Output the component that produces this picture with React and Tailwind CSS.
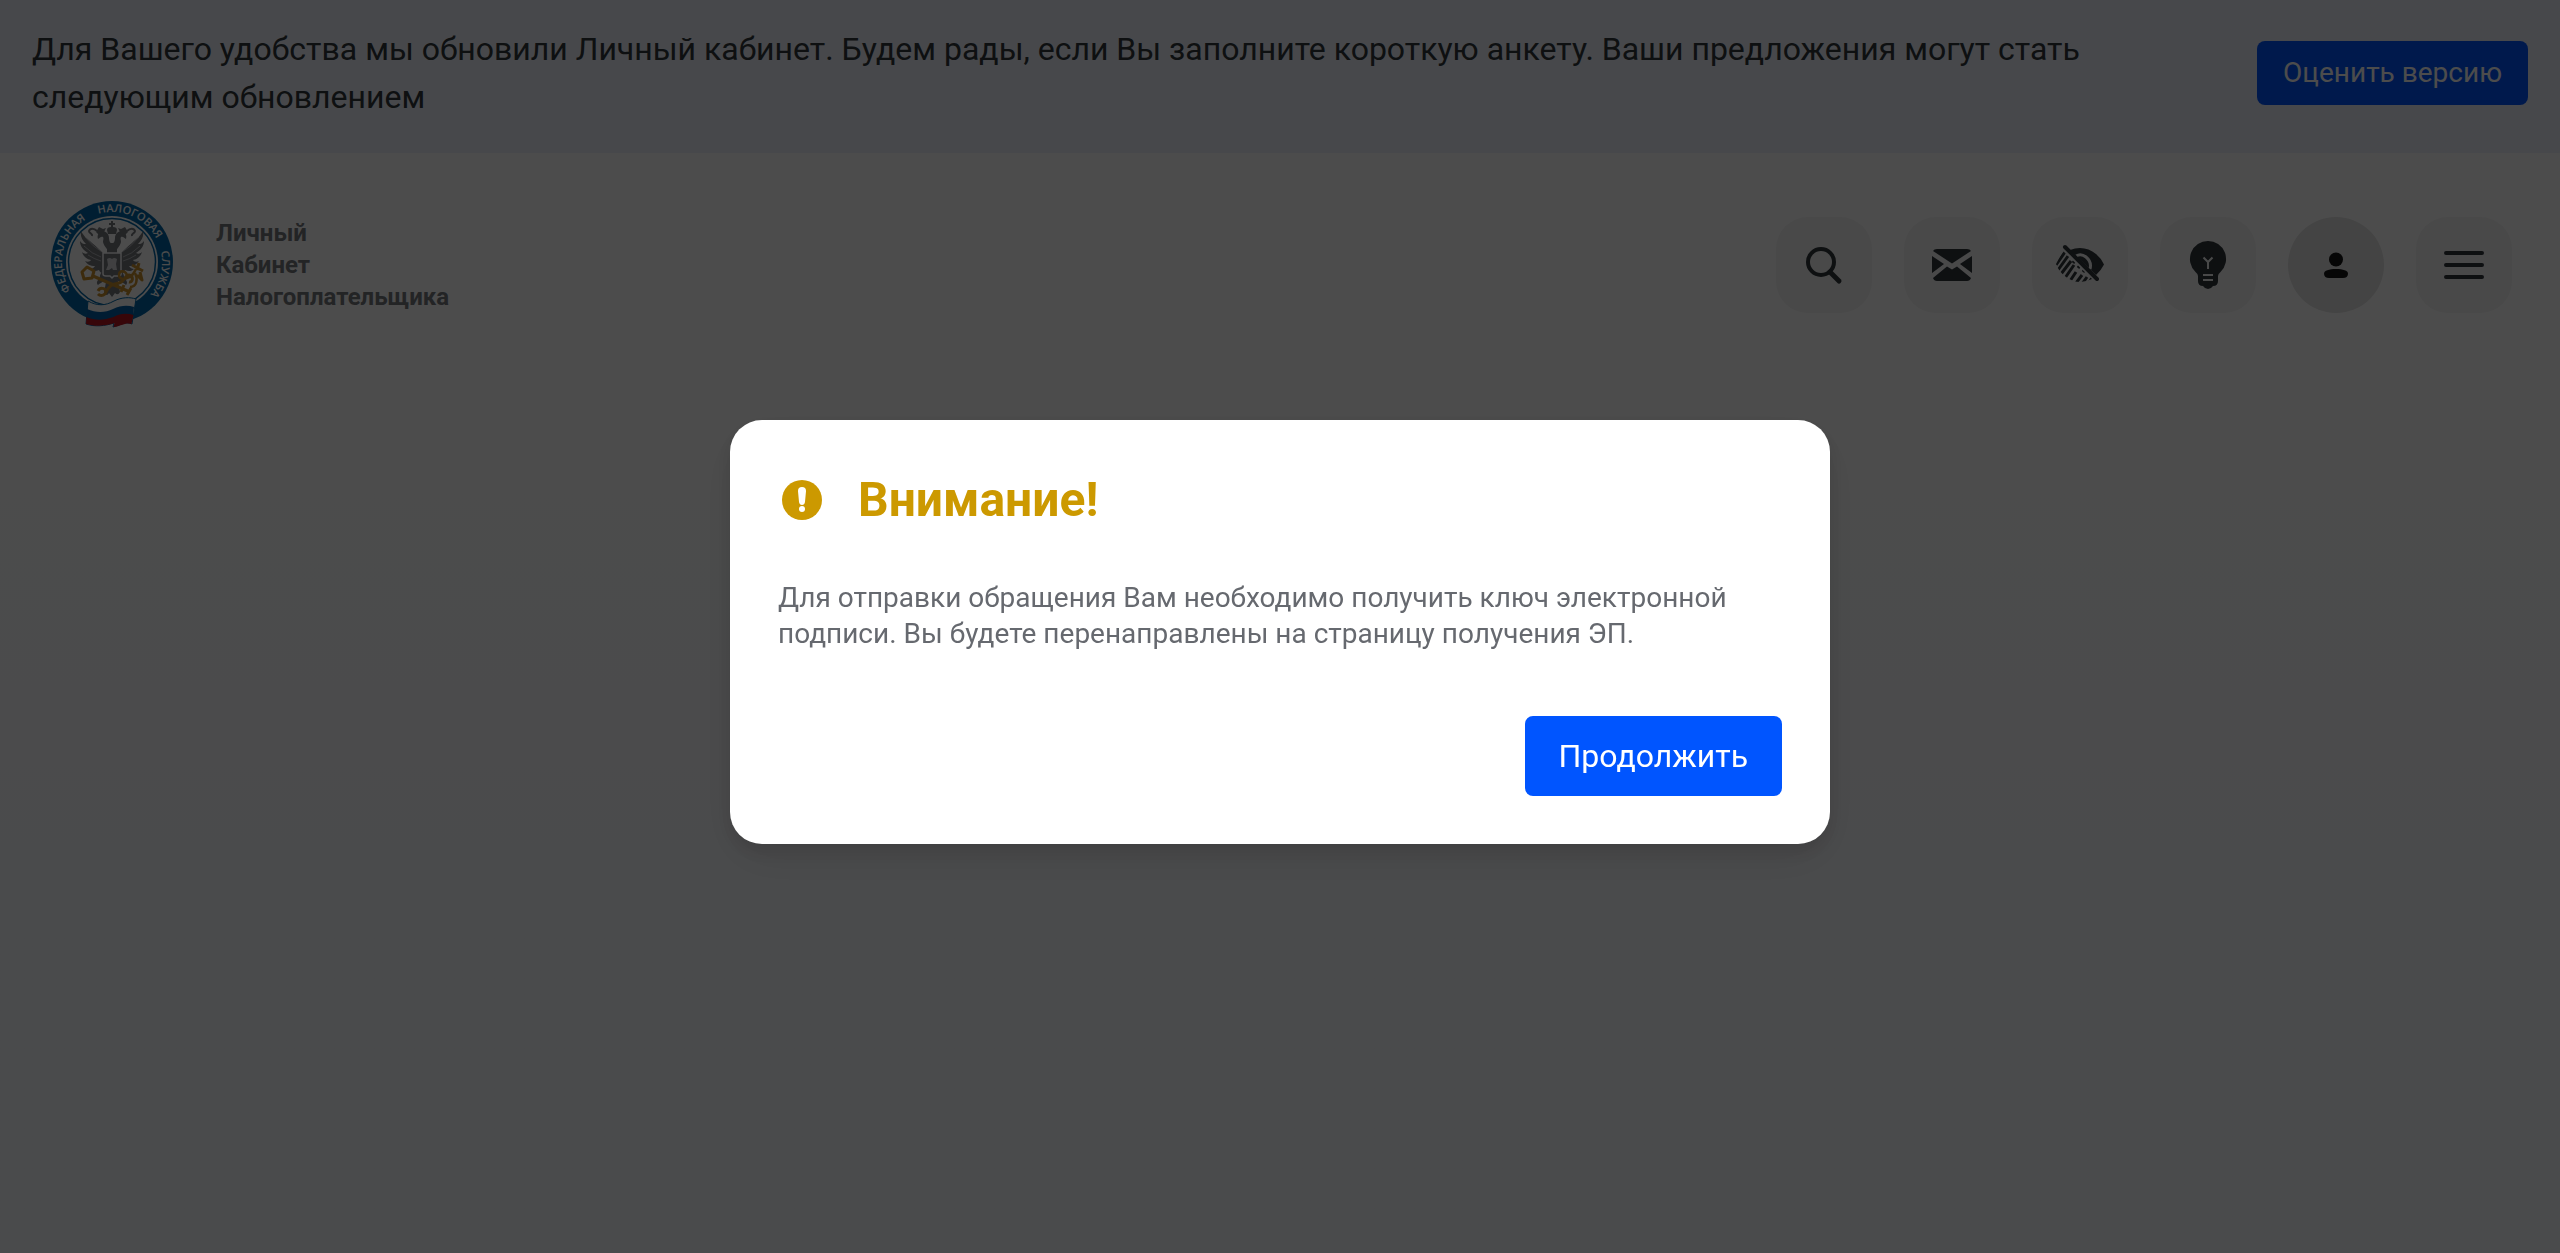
const WING =
  'M60 76c-4 1-7 0-8-3c-4 2-7 1-9-1c2 0 4-1 5-3c-5 0-8-2-10-5c2 1 5 1 6-1c-5-1-8-4-9-8c2 2 4 2 6 1c-5-3-8-7-8-12c2 3 4 3 6 3c-4-4-6-8-5-13c3 6 7 8 11 12c5 4 9 8 12 11c2 2 3 5 3 8z';

const HEAD =
  'M63 58c-1-5-6-8-7-13c0-2 1-4 0-5c-2-1-3 1-5 2c-1-3 0-7 4-8c4 0 7 3 7 7c0 3 1 5 3 6v11z';

const LEG = 'M58 70c-2 4-6 7-5 12c-3 1-4 4-2 6c2-2 4-2 5-4c3 1 5-1 6-4z';

function EagleHalf() {
  return (
    <g>
      <path d={WING} fill="#75787e" />
      <path d={HEAD} fill="#75787e" />
      <path d={LEG} fill="#75787e" />
      <path
        d="M38 40q8 10 17 15M37 49q8 8 17 11M41 58q6 4 13 6"
        fill="none"
        stroke="#fff"
        strokeWidth="1"
        opacity=".45"
      />
      <path d="M49 35l3-5l4 2l3-1l-3 6h-5z" fill="#75787e" />
      <path d="M50 34c-3-3-7-3-8 0c0 3 4 2 3 5" fill="none" stroke="#75787e" strokeWidth="2" />
    </g>
  );
}

const WORDS = [
  { text: 'ФЕДЕРАЛЬНАЯ', at: '20%' },
  { text: 'НАЛОГОВАЯ', at: '59%' },
  { text: 'СЛУЖБА', at: '90%' },
];

function Emblem() {
  return (
    <svg
      viewBox="1 1 130 134"
      className="h-[134px] w-[130px] shrink-0"
      role="img"
      aria-label="Федеральная налоговая служба"
    >
      <defs>
        <path id="emblem-ring" d="M26.700 97.100A50 50 0 1 1 103.300 97.100" />
      </defs>
      <circle cx="65" cy="65" r="61" fill="#0067a8" />
      <circle cx="65" cy="65" r="46" fill="#fff" />
      <circle cx="65" cy="65" r="43.500" fill="none" stroke="#0067a8" strokeWidth="1.500" />
      <text
        fill="#fff"
        fontFamily="Open Sans, Noto Sans, sans-serif"
        fontWeight="600"
        fontSize="11"
        textAnchor="middle"
      >
        {WORDS.map(({ text, at }) => (
          <textPath key={text} href="#emblem-ring" startOffset={at}>
            {text}
          </textPath>
        ))}
      </text>

      <EagleHalf />
      <g transform="matrix(-1 0 0 1 130 0)">
        <EagleHalf />
      </g>
      <g fill="#75787e">
        <path d="M64 24h2v2h2v2h-2v2q4 0 4 3l-1 4h-8l-1-4q0-3 4-3v-2h-2v-2h2z" />
        <path d="M61 74l-4 22q3 4 5 0l3 4l3-4q3 3 5-1l-4-21z" />
        <path d="M60 46h10v12H60z" />
      </g>
      <path d="M56 56h18v21q0 2-3 2h-4l-2 2l-2-2h-4q-3 0-3-2z" fill="#75787e" stroke="#fff" strokeWidth="1.500" />
      <path d="M60 62q3-2 5 0q2-2 5 0l-1 5l1 6h-4l-1-2l-3 2h-3l2-5z" fill="#d5d7da" />

      <g fill="none" stroke="#c98f2e" strokeWidth="3" strokeLinejoin="round">
        <path d="M35 75l5-5l7 4l-2 7l-8 1z" />
        <path d="M46 79l37 16" />
        <path d="M77 88l-3 7M84 91l-4 7" />
        <path d="M51 94c2-4 7-3 8 0c0 4-5 6-8 3" />
        <path d="M59 95c4-8 8-8 13-9c5-1 6-8 10-8c5 1 4 8 0 7" />
        <path d="M80 78c-2-5-8-5-8 0c0 4 5 5 8 3c5-1 7-5 9-9" strokeWidth="2.500" />
        <path d="M83 90c7 0 8-8 5-14" strokeWidth="2.500" />
        <path d="M85 68l11 6M92 66l-2 7M93 75l2 8l-5-5" />
      </g>

      <path
        d="M41 104c9 5 17 5 26 0c8-4 16-4 22-2l-4 25c-7-3-11 1-19 3l1-4c-9 3-19 4-28 1z"
        fill="#fff"
        stroke="#0067a8"
        strokeWidth="1"
      />
      <path d="M40 112c9 4 18 4 26 0c8-4 15-4 21-2l-1 9c-7-2-13-1-19 2c-10 4-19 4-28 0z" fill="#0060a8" />
      <path d="M39.500 120c9 4 18 3 27 0c7-4 14-4 20-2l-2 9c-6-2-10 2-18 3l1-4c-9 3-19 4-28.500 1z" fill="#b8141f" />
    </svg>
  );
}

const ico = 'h-12 w-12';

const SearchIcon = () => (
  <svg viewBox="0 0 48 48" className={ico} fill="none" stroke="#2f363b" strokeWidth="4">
    <circle cx="21" cy="21" r="13" />
    <path d="M30 31l9 9" strokeWidth="5" strokeLinecap="round" />
  </svg>
);

const MailIcon = () => (
  <svg viewBox="0 0 48 48" className={ico} fill="#2f363b">
    <path d="M5 10q1-2 4-2h30q3 0 4 2L24 22.500z" />
    <path d="M4 15l12 8L4 32z M44 15l-12 8l12 9z" />
    <path d="M5 37l14-11.500l5 3l5-3L43 37q-1 3-4 3H9q-3 0-4-3z" />
  </svg>
);

const EyeIcon = () => (
  <svg viewBox="0 0 48 48" className={ico}>
    <defs>
      <clipPath id="eye-low">
        <path d="M7 10L0 23q3 8 10 13q7 5 14 5q6 0 12-3z" />
      </clipPath>
    </defs>
    <path d="M14 9q5-2 10-2q9 0 16 6q5 4 8 10.500q-3 6-8 10.500z" fill="#2f363b" />
    <path d="M20 15q5-3 10 1q6 5 4 12" fill="none" stroke="#f5f5f5" strokeWidth="3" />
    <g clipPath="url(#eye-low)" stroke="#2f363b" strokeWidth="3">
      <path d="M0 24l9-13M2 29l10-14M5 33l10-13M9 37l9-13M14 40l6-9M20 42l6-8M26 43l5-7M32 43l4-6M17 22l3-4M22 27l3-4M27 31l3-4" />
    </g>
    <path d="M9 6l32 32" stroke="#2f363b" strokeWidth="4" strokeLinecap="round" />
  </svg>
);

const BulbIcon = () => (
  <svg viewBox="0 0 48 48" className={ico}>
    <path
      d="M24 0a18 18 0 0 1 12.500 31q-2.500 2-2.500 4v5q0 5-5 5q-2 3-5 3t-5-3q-5 0-5-5v-5q0-2-2.500-4A18 18 0 0 1 24 0z"
      fill="#2f363b"
    />
    <path d="M19.500 16.500l4.500 4.500l4.500-4.500M24 21v7M19 34h10M19 39h10" stroke="#f5f5f5" strokeWidth="2" fill="none" />
  </svg>
);

const UserIcon = () => (
  <svg viewBox="0 0 48 48" className={ico} fill="#161616">
    <circle cx="24" cy="18.500" r="7" />
    <path d="M12 32.500c0-3 5-4.500 12-4.500s12 1.500 12 4.500c0 3-2 4.500-5 4.500H17c-3 0-5-1.500-5-4.500z" />
  </svg>
);

const MenuIcon = () => (
  <svg viewBox="0 0 48 48" className={ico} stroke="#2f363b" strokeWidth="4" strokeLinecap="round">
    <path d="M6 12h36M6 24h36M6 36h36" />
  </svg>
);

const ACTIONS = [
  { label: 'Поиск', Icon: SearchIcon },
  { label: 'Сообщения', Icon: MailIcon },
  { label: 'Версия для слабовидящих', Icon: EyeIcon },
  { label: 'Подсказки', Icon: BulbIcon },
  { label: 'Профиль', Icon: UserIcon, round: true },
  { label: 'Меню', Icon: MenuIcon },
];

export default function App() {
  return (
    <div className="min-h-screen bg-linear-to-b from-white from-25% to-[#f8fafd] to-75% font-['Roboto',sans-serif]">
      <div className="flex items-center justify-between gap-16 bg-[#eef1fa] px-8 pt-[25px] pb-8">
        <p className="max-w-[2100px] text-[32px] leading-[48px] text-[#2f363b]">
          Для Вашего удобства мы обновили Личный кабинет. Будем рады, если Вы заполните короткую анкету. Ваши
          предложения могут стать следующим обновлением
        </p>
        <button className="h-16 shrink-0 rounded-lg bg-[#0055ff] px-[26px] text-[28px] text-white">
          Оценить версию
        </button>
      </div>

      <header className="flex items-center justify-between px-12 pt-[45px] pb-11">
        <a href="#" className="flex items-center gap-[38px]">
          <Emblem />
          <span className="flex flex-col text-[24px] leading-8 font-bold text-[#75787e]">
            <span>Личный</span>
            <span>Кабинет</span>
            <span>Налогоплательщика</span>
          </span>
        </a>
        <nav className="flex gap-8">
          {ACTIONS.map(({ label, Icon, round }) => (
            <button
              key={label}
              aria-label={label}
              className={
                round
                  ? 'flex size-24 items-center justify-center rounded-full bg-[#e3e3e3]'
                  : 'flex size-24 items-center justify-center rounded-[32px] bg-[#f5f5f5]'
              }
            >
              <Icon />
            </button>
          ))}
        </nav>
      </header>

      <div className="fixed inset-0 flex items-center justify-center bg-black/70 pt-[10px]">
        <section
          role="dialog"
          aria-modal="true"
          aria-labelledby="dialog-title"
          className="w-full max-w-[1100px] rounded-[32px] bg-white p-12 shadow-[0_8px_20px_rgba(0,0,0,0.12),0_16px_48px_rgba(0,0,0,0.08)]"
        >
          <div className="flex items-center gap-8">
            <svg viewBox="0 0 48 48" className="size-12 shrink-0">
              <circle cx="24" cy="24" r="20" fill="#cc9900" />
              <path d="M24 11q4 0 4 4l-1 11q-.5 3-3 3t-3-3l-1-11q0-4 4-4z" fill="#fff" />
              <circle cx="24" cy="33" r="3" fill="#fff" />
            </svg>
            <h1 id="dialog-title" className="text-[48px] leading-[64px] font-bold text-[#cc9900]">
              Внимание!
            </h1>
          </div>
          <p className="mt-12 text-[28px] leading-9 text-[#66696f]">
            Для отправки обращения Вам необходимо получить ключ электронной подписи. Вы будете перенаправлены на
            страницу получения ЭП.
          </p>
          <div className="mt-16 flex justify-end">
            <button className="h-20 rounded-lg bg-[#0055ff] px-[34px] text-[32px] text-white">Продолжить</button>
          </div>
        </section>
      </div>
    </div>
  );
}
